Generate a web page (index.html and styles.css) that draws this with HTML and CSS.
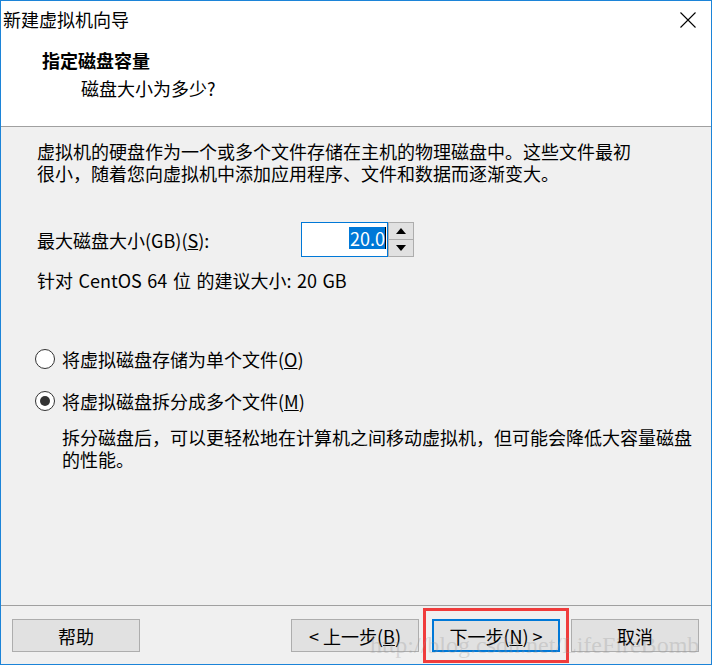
FILE: index.html
```html
<!DOCTYPE html>
<html lang="zh-CN">
<head>
<meta charset="utf-8">
<title>新建虚拟机向导</title>
<link rel="stylesheet" href="styles.css">
</head>
<body>
<div class="window">
  <div class="titlebar">
    <span class="title">新建虚拟机向导</span>
    <svg class="close" width="16" height="16" viewBox="0 0 16 16"><path d="M0.5 0.5 L15.5 15.5 M15.5 0.5 L0.5 15.5" stroke="#000" stroke-width="1.1" fill="none"/></svg>
  </div>
  <div class="header">
    <div class="heading">指定磁盘容量</div>
    <div class="subheading">磁盘大小为多少?</div>
  </div>
  <div class="content">
    <p class="para">虚拟机的硬盘作为一个或多个文件存储在主机的物理磁盘中。这些文件最初<br>很小，随着您向虚拟机中添加应用程序、文件和数据而逐渐变大。</p>
    <div class="size-row">
      <span class="label">最大磁盘大小(GB)(<u>S</u>):</span>
      <div class="spin">
        <div class="spin-input"><span class="sel">20.0</span><span class="caret"></span></div>
        <div class="spin-btns">
          <div class="spin-btn"><svg width="10" height="6" viewBox="0 0 10 6"><path d="M0 6 L5 0 L10 6 Z" fill="#000"/></svg></div>
          <div class="spin-btn"><svg width="10" height="6" viewBox="0 0 10 6"><path d="M0 0 L10 0 L5 6 Z" fill="#000"/></svg></div>
        </div>
      </div>
    </div>
    <div class="recommend">针对 CentOS 64 位 的建议大小: 20 GB</div>
    <div class="radio-row first"><span class="radio"></span><span>将虚拟磁盘存储为单个文件(<u>O</u>)</span></div>
    <div class="radio-row second"><span class="radio checked"></span><span>将虚拟磁盘拆分成多个文件(<u>M</u>)</span></div>
    <p class="desc">拆分磁盘后，可以更轻松地在计算机之间移动虚拟机，但可能会降低大容量磁盘<br>的性能。</p>
  </div>
  <div class="footer">
    <div class="btn">帮助</div>
    <div class="btn back">&lt; 上一步(<u>B</u>)</div>
    <div class="btn next">下一步(<u>N</u>) &gt;</div>
    <div class="btn cancel">取消</div>
  </div>
  <div class="highlight-box"></div>
  <div class="watermark">http://blog.csdn.net/LifeFireBomb</div>
</div>
</body>
</html>
```
FILE: styles.css
```css
html, body {
  margin: 0;
  padding: 0;
  background: #f0f0f0;
}
.window {
  position: relative;
  width: 712px;
  height: 665px;
  box-sizing: border-box;
  border: 1px solid #1c84d8;
  background: #f0f0f0;
  display: flex;
  flex-direction: column;
  font-family: "Microsoft YaHei", "Noto Sans CJK SC", sans-serif;
  font-size: 18px;
  color: #000;
  overflow: hidden;
}
.titlebar {
  height: 36px;
  background: #fff;
  display: flex;
  align-items: center;
  justify-content: space-between;
  padding-left: 2px;
}
.title {
  line-height: 36px;
}
.close {
  margin-right: 15px;
  margin-top: 1px;
}
.header {
  height: 89px;
  background: #fff;
  border-bottom: 1px solid #a0a0a0;
  padding-left: 41px;
}
.heading {
  font-weight: bold;
  line-height: 22px;
  margin-top: 12px;
}
.subheading {
  line-height: 22px;
  margin-top: 6px;
  padding-left: 39px;
}
.content {
  padding-left: 36px;
  flex: 1;
}
.para {
  margin: 13px 0 0;
  line-height: 22px;
}
.size-row {
  margin-top: 38px;
  display: flex;
  align-items: center;
}
.label {
  width: 264px;
  line-height: 22px;
}
.spin {
  display: flex;
  height: 35px;
}
.spin-input {
  width: 84px;
  height: 33px;
  border: 1px solid #0078d7;
  background: #fff;
  display: flex;
  align-items: center;
  justify-content: flex-end;
  padding-right: 1px;
}
.sel {
  background: #0078d7;
  color: #fff;
  line-height: 22px;
  padding: 0 0 0 1px;
  margin-bottom: 4px;
}
.caret {
  width: 1px;
  height: 22px;
  background: #000;
  margin-bottom: 4px;
}
.spin-btns {
  display: flex;
  flex-direction: column;
  width: 26px;
}
.spin-btn {
  flex: 1;
  border: 1px solid #adadad;
  background: #e1e1e1;
  display: flex;
  align-items: center;
  justify-content: center;
}
.spin-btn + .spin-btn {
  border-top: none;
}
.recommend {
  margin-top: 12px;
  line-height: 22px;
  word-spacing: 1.5px;
}
.radio-row {
  display: flex;
  align-items: center;
  line-height: 22px;
  margin-left: -2px;
  gap: 7px;
}
.radio-row.first {
  margin-top: 57px;
}
.radio-row.second {
  margin-top: 20px;
}
.radio {
  width: 18px;
  height: 18px;
  border: 1px solid #333;
  border-radius: 50%;
  background: #fff;
  display: flex;
  align-items: center;
  justify-content: center;
}
.radio.checked::after {
  content: "";
  width: 10px;
  height: 10px;
  border-radius: 50%;
  background: #333;
}
.desc {
  margin: 14px 0 0;
  padding-left: 25px;
  line-height: 22px;
}
.footer {
  border-top: 1px solid #a0a0a0;
  padding: 13px 12px 12px 11px;
  display: flex;
  align-items: center;
}
.btn {
  width: 126px;
  height: 31px;
  border: 1px solid #adadad;
  background: #e1e1e1;
  display: flex;
  align-items: center;
  justify-content: center;
  line-height: 22px;
}
.btn.back {
  margin-left: auto;
}
.btn.next {
  margin-left: 13px;
  width: 124px;
  height: 29px;
  border: 2px solid #0078d7;
}
.btn.cancel {
  margin-left: 11px;
}
.highlight-box {
  position: absolute;
  left: 422px;
  top: 607px;
  width: 140px;
  height: 49px;
  border: 3px solid #f03c3c;
}
.watermark {
  position: absolute;
  left: 369px;
  top: 630px;
  font-family: "Liberation Serif", serif;
  font-size: 24px;
  line-height: 28px;
  color: rgba(150, 150, 150, 0.3);
  white-space: nowrap;
}
```
